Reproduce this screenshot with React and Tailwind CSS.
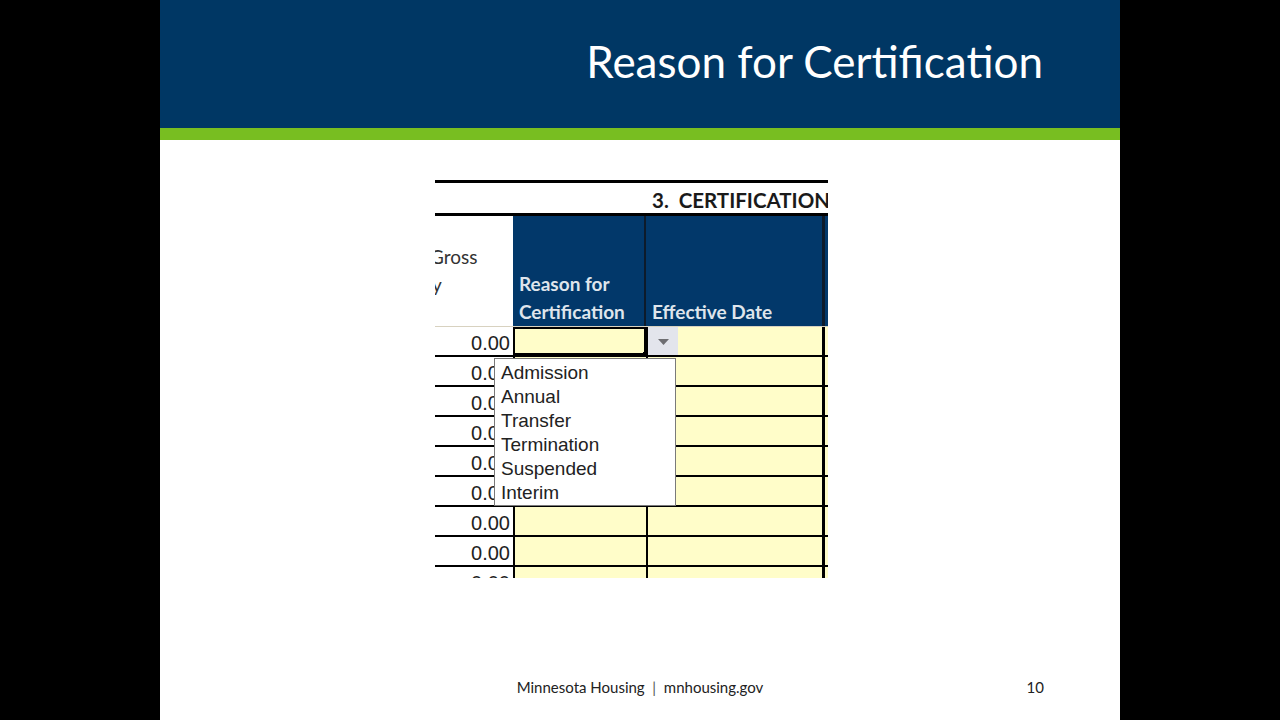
import React from "react";

const calibri = { fontFamily: "Lato, 'Open Sans', sans-serif" };
const tahoma = { fontFamily: "'Liberation Sans', Arial, sans-serif" };

const options = ["Admission", "Annual", "Transfer", "Termination", "Suspended", "Interim"];

const Row = ({ first }) => (
  <div className="flex h-[30px] border-b-2 border-black shrink-0">
    <div
      className="w-[78px] bg-white flex items-center justify-end pr-[3px] pt-[3px] text-[20px] text-[#222]"
      style={tahoma}
    >
      0.00
    </div>
    {first ? (
      <div className="w-[133px] border-black bg-[#fffdc9] border-2 relative">
        <div className="absolute -bottom-[3px] -right-[3px] w-[4px] h-[4px] bg-black" />
      </div>
    ) : (
      <div className="w-[133px] border-l-2 border-black bg-[#fffdc9]" />
    )}
    <div className="w-[176px] border-l-2 border-black bg-[#fffdc9] flex">
      {first && (
        <div className="w-[30px] h-full bg-[#e3e5ec] flex items-center justify-center pt-[2px]">
          <svg width="11" height="6" viewBox="0 0 11 6">
            <path d="M0 0 L11 0 L5.5 6 Z" fill="#6e6e72" />
          </svg>
        </div>
      )}
    </div>
    <div className="w-[3px] bg-black" />
    <div className="flex-1 bg-[#fffdc9]" />
  </div>
);

export default function App() {
  return (
    <div className="w-full h-[720px] bg-black flex justify-center">
      <div className="w-[960px] h-[720px] bg-white flex flex-col">
        <div className="h-[128px] bg-[#003764] flex justify-end pr-[77px] pt-[39px]">
          <h1 className="text-white text-[44px] leading-[44px]" style={calibri}>
            Reason for Certification
          </h1>
        </div>
        <div className="h-[12px] bg-[#78be21]" />

        <div className="flex-1 flex flex-col">
          <div className="pt-[40px] pl-[275px]">
            <div className="w-[393px] h-[398px] overflow-hidden relative bg-white flex flex-col">
              <div className="h-[3px] bg-black shrink-0" />
              <div
                className="h-[30px] shrink-0 flex items-center pl-[217px] pt-[4px] whitespace-nowrap font-bold text-[20.5px] text-[#1a1a1a]"
                style={calibri}
              >
                3.&nbsp;&nbsp;CERTIFICATION
              </div>
              <div className="h-[3px] bg-black shrink-0" />

              <div className="flex h-[111px] shrink-0 border-b border-[#d8d2c0]" style={calibri}>
                <div className="w-[78px] bg-white flex flex-col justify-end pb-[27px] text-[19px] leading-[28px] text-[#333] overflow-hidden">
                  <span className="-ml-[5px] whitespace-nowrap">Gross</span>
                  <span className="-ml-[3px]">y</span>
                </div>
                <div className="w-[133px] bg-[#02386a] border-r-2 border-[#0d1b2b] flex flex-col justify-end pl-[6px] text-[19px] leading-[28px] font-bold text-[#dfe5ec] whitespace-nowrap">
                  <span>Reason for</span>
                  <span>Certification</span>
                </div>
                <div className="w-[176px] bg-[#02386a] flex flex-col justify-end pl-[6px] text-[19px] leading-[28px] font-bold text-[#dfe5ec]">
                  <span>Effective Date</span>
                </div>
                <div className="w-[3px] bg-[#0d1b2b]" />
                <div className="flex-1 bg-[#02386a]" />
              </div>

              <Row first />
              {Array.from({ length: 8 }).map((_, i) => (
                <Row key={i} />
              ))}

              <div
                className="absolute left-[59px] top-[178px] w-[182px] h-[148px] bg-white border border-[#7a7a7a] pl-[6px] pt-[2px] text-[19px] leading-[24px] text-[#222]"
                style={tahoma}
              >
                {options.map((o) => (
                  <div key={o}>{o}</div>
                ))}
              </div>
            </div>
          </div>

          <div className="flex-1" />

          <div
            className="grid grid-cols-[1fr_auto_1fr] items-center h-[20px] mb-[24px] px-[76px] text-[15px] text-[#222]"
            style={calibri}
          >
            <div />
            <div className="whitespace-nowrap">
              Minnesota Housing&nbsp;&nbsp;<span className="text-[#555]">|</span>&nbsp;&nbsp;mnhousing.gov
            </div>
            <div className="justify-self-end">10</div>
          </div>
        </div>
      </div>
    </div>
  );
}
